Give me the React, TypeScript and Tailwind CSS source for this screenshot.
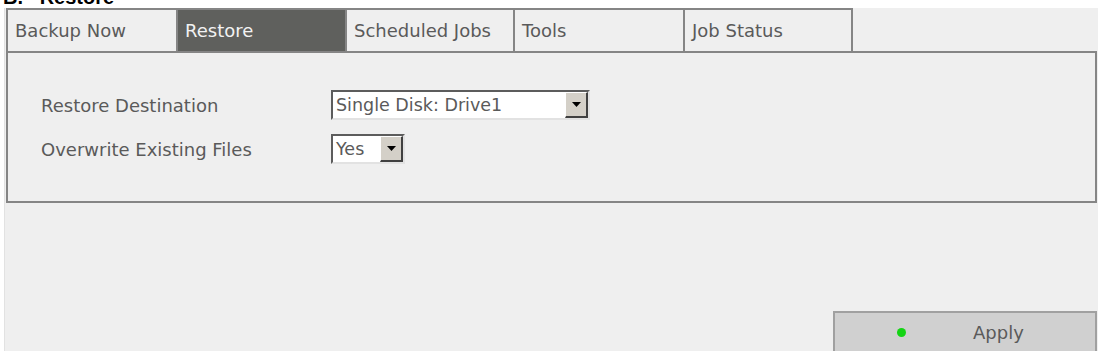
const tabs = [
    { label: "Backup Now", w: "w-[170px]" },
    { label: "Restore", w: "w-[169px]", active: true },
    { label: "Scheduled Jobs", w: "w-[168px]" },
    { label: "Tools", w: "w-[170px]" },
    { label: "Job Status", w: "w-[170px]" },
];

const DropButton = () => (
    <div className="h-full w-[23px] bg-[#d4d0c8] border-t border-l border-t-white border-l-white border-b-2 border-r-2 border-b-[#404040] border-r-[#404040] flex items-center justify-center">
        <svg width="9" height="5" viewBox="0 0 9 5">
            <path d="M0 0h9L4.5 5z" fill="#000" />
        </svg>
    </div>
);

const Select = ({ value, w }: { value: string; w: string }) => (
    <div className={`${w} h-[30px] bg-white flex items-stretch border-2 border-t-[#5c5c5c] border-l-[#5c5c5c] border-b-[#e2e2e2] border-r-[#e2e2e2]`}>
        <div className="flex-1 pl-[3px] flex items-center text-[17.5px] text-[#5a5a5a] whitespace-nowrap overflow-hidden">{value}</div>
        <DropButton />
    </div>
);

const App = () => {
    return (
        <div className="w-[1098px] h-[351px] bg-white overflow-hidden flex flex-col font-['DejaVu_Sans',sans-serif]">
            {/* page heading, mostly scrolled off */}
            <div className="h-[8px] overflow-hidden shrink-0">
                <div className="pl-[3px] -mt-[13px] leading-none text-[20px] font-bold text-black font-['Liberation_Sans',sans-serif] whitespace-pre">
                    B.   Restore
                </div>
            </div>

            <div className="flex-1 ml-[4px] bg-[#efefef] border-l border-[#e2e2e2] pl-[1px] pr-[1px] flex flex-col">
                {/* tabs */}
                <div className="flex h-[43px] shrink-0">
                    {tabs.map((t, i) => (
                        <div
                            key={t.label}
                            className={`${t.w} border-t-2 border-l-2 border-[#858585] ${i === tabs.length - 1 ? "border-r-2" : ""} ${t.active ? "bg-[#5f605d] text-[#f2f2f2]" : "text-[#5a5a5a]"} flex items-center pl-[7px] text-[18px]`}
                        >
                            {t.label}
                        </div>
                    ))}
                </div>

                {/* panel */}
                <div className="h-[152px] border-2 border-[#858585] shrink-0 pt-[37px] pl-[33px] flex flex-col gap-[14px]">
                    <div className="flex items-center">
                        <div className="w-[290px] text-[18px] text-[#5a5a5a]">Restore Destination</div>
                        <Select value="Single Disk: Drive1" w="w-[259px]" />
                    </div>
                    <div className="flex items-center">
                        <div className="w-[290px] text-[18px] text-[#5a5a5a]">Overwrite Existing Files</div>
                        <Select value="Yes" w="w-[74px]" />
                    </div>
                </div>

                {/* apply */}
                <div className="flex-1 flex items-end justify-end">
                    <button className="w-[264px] h-[40px] bg-[#d0d0d0] border-2 border-b-0 border-[#a0a0a0] flex items-center text-[18px] text-[#5a5a5a]">
                        <span className="ml-[62px] w-[9px] h-[9px] rounded-full bg-[#14d414]" />
                        <span className="ml-[67px]">Apply</span>
                    </button>
                </div>
            </div>
        </div>
    );
};

export default App;
